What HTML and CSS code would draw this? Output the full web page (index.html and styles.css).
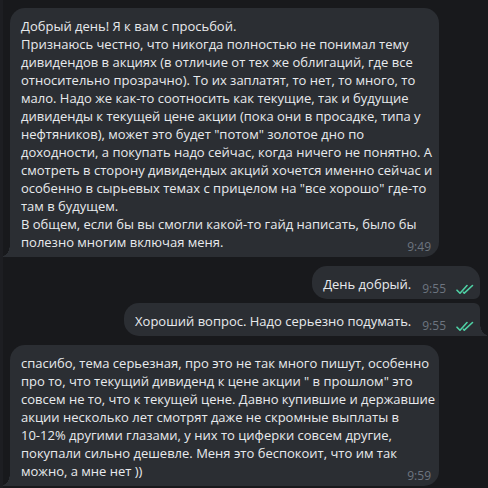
FILE: index.html
```html
<!DOCTYPE html>
<html lang="ru">
<head>
<meta charset="utf-8">
<title>Chat</title>
<link rel="stylesheet" href="styles.css">
</head>
<body>
<div class="chat">
  <div class="group group-in">
    <div class="bubble in tail">
      <div class="text">Добрый день! Я к вам с просьбой.<br>Признаюсь честно, что никогда полностью не понимал тему<br>дивидендов в акциях (в отличие от тех же облигаций, где все<br>относительно прозрачно). То их заплатят, то нет, то много, то<br>мало. Надо же как-то соотносить как текущие, так и будущие<br>дивиденды к текущей цене акции (пока они в просадке, типа у<br>нефтяников), может это будет "потом" золотое дно по<br>доходности, а покупать надо сейчас, когда ничего не понятно. А<br>смотреть в сторону дивидендых акций хочется именно сейчас и<br>особенно в сырьевых темах с прицелом на "все хорошо" где-то<br>там в будущем.<br>В общем, если бы вы смогли какой-то гайд написать, было бы<br>полезно многим включая меня.</div>
      <span class="time time-in">9:49</span>
    </div>
  </div>
  <div class="group group-out">
    <div class="bubble out first">
      <div class="text">День добрый.</div>
      <div class="meta"><span class="time">9:55</span><svg class="checks" viewBox="0 0 18 11" width="18" height="11"><path d="M1 6.2 L4 9.2 L11 1.5" /><path d="M7.5 8.4 L8.3 9.2 L16.5 1.5" /></svg></div>
    </div>
    <div class="bubble out last tail">
      <div class="text">Хороший вопрос. Надо серьезно подумать.</div>
      <div class="meta"><span class="time">9:55</span><svg class="checks" viewBox="0 0 18 11" width="18" height="11"><path d="M1 6.2 L4 9.2 L11 1.5" /><path d="M7.5 8.4 L8.3 9.2 L16.5 1.5" /></svg></div>
    </div>
  </div>
  <div class="group group-in">
    <div class="bubble in tail">
      <div class="text">спасибо, тема серьезная, про это не так много пишут, особенно<br>про то, что текущий дивиденд к цене акции " в прошлом" это<br>совсем не то, что к текущей цене. Давно купившие и державшие<br>акции несколько лет смотрят даже не скромные выплаты в<br>10-12% другими глазами, у них то циферки совсем другие,<br>покупали сильно дешевле. Меня это беспокоит, что им так<br>можно, а мне нет ))</div>
      <span class="time time-in">9:59</span>
    </div>
  </div>
</div>
</body>
</html>
```

FILE: styles.css
```css
html, body {
  margin: 0;
  padding: 0;
}
body {
  width: 488px;
  height: 488px;
  overflow: hidden;
  background: linear-gradient(to right, #1d1e22 3px, #18191c 3px);
  font-family: "Open Sans", "Noto Sans", sans-serif;
  color: #e8eaed;
}
.chat {
  display: flex;
  flex-direction: column;
  gap: 9px;
  padding: 8px 8px 0 10px;
}
.group {
  display: flex;
  flex-direction: column;
  gap: 4px;
}
.group-out {
  align-items: flex-end;
}
.bubble {
  position: relative;
  background: #2b2e33;
  font-size: 13px;
  line-height: 18px;
  white-space: nowrap;
}
.bubble.in {
  width: 429px;
  box-sizing: border-box;
  padding: 9px 8px 6px 11px;
  border-radius: 15px 15px 15px 0;
}
.bubble.out {
  display: flex;
  align-items: flex-end;
  padding: 9px 6px 3px 11px;
}
.bubble.out .text {
  margin-bottom: 3px;
}
.bubble.out.first {
  border-radius: 15px 15px 6px 15px;
}
.bubble.out.last {
  border-radius: 15px 6px 0 15px;
}
.bubble.tail::before {
  content: "";
  position: absolute;
  bottom: 0;
  width: 7px;
  height: 13px;
}
.bubble.in.tail::before {
  left: -7px;
  background: radial-gradient(ellipse 7px 12px at 0 0, transparent 96%, #2b2e33 100%);
}
.bubble.out.tail::before {
  right: -7px;
  background: radial-gradient(ellipse 7px 12px at 100% 0, transparent 96%, #2b2e33 100%);
}
.time {
  font-size: 12px;
  line-height: 14px;
  color: #6d7580;
}
.time-in {
  position: absolute;
  right: 8px;
  bottom: 3px;
}
.meta {
  display: flex;
  align-items: center;
  gap: 10px;
  margin-left: 11px;
  height: 14px;
}
.checks {
  fill: none;
  stroke: #4fd1a5;
  stroke-width: 1.6;
  stroke-linecap: round;
  stroke-linejoin: round;
}
```
